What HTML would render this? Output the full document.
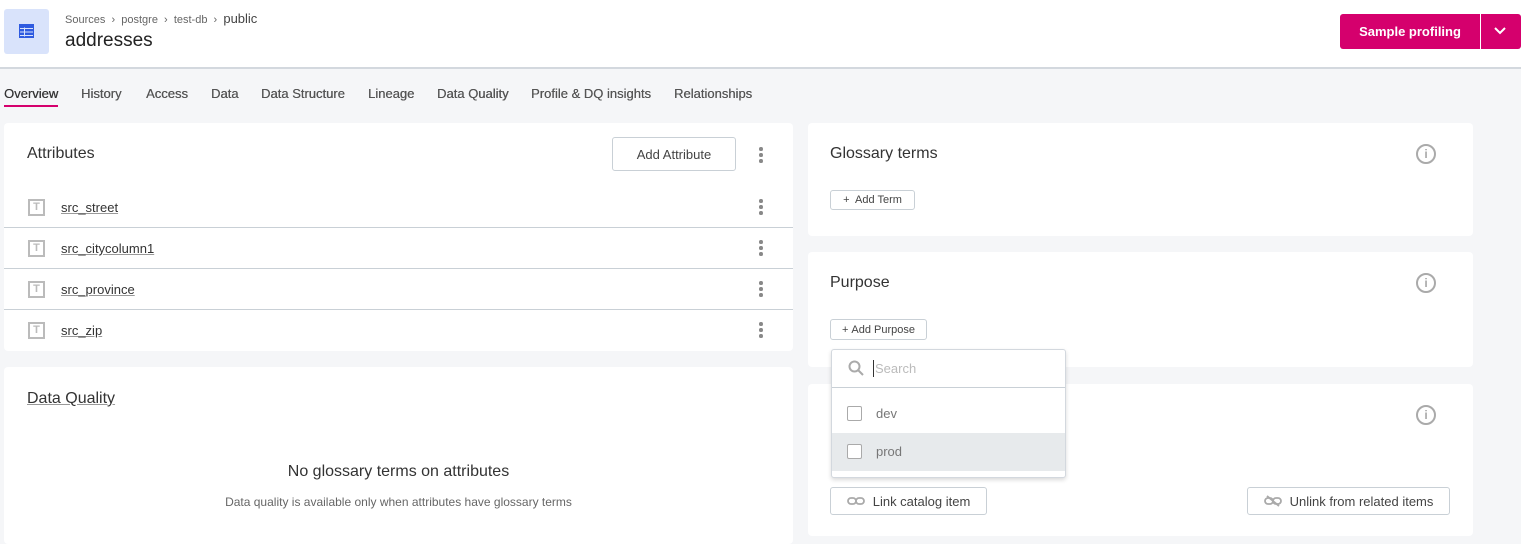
<!DOCTYPE html>
<html><head><style>
*{box-sizing:border-box;margin:0;padding:0}
body{width:1521px;height:544px;overflow:hidden;background:#f5f6f8;font-family:"Liberation Sans",Arial,sans-serif;color:#333;position:relative}
.abs{position:absolute}
.card{position:absolute;background:#fff;border-radius:4px}
.t{font-size:16px;color:#333}
.btn{position:absolute;border:1px solid #c9d0d6;border-radius:3px;background:#fff;font-size:13px;color:#444;display:flex;align-items:center;justify-content:center}
.dots{position:absolute;width:4px}
.dots i{display:block;width:3.5px;height:3.5px;border-radius:50%;background:#888;margin-bottom:2.5px}
.info{position:absolute;width:20px;height:20px;border:2px solid #aaa;border-radius:50%;color:#aaa;font-size:12px;font-weight:bold;text-align:center;line-height:16px}
.row{position:absolute;left:0;width:789px;height:41px;border-top:1px solid #c9d0d6}
.ti{position:absolute;left:24px;width:17px;height:17px;border:2px solid #bbb;color:#bbb;font-size:11px;font-weight:bold;text-align:center;line-height:13px}
.an{position:absolute;left:57px;font-size:13px;color:#333;text-decoration:underline;text-decoration-color:#999}
.tab{position:absolute;top:86px;font-size:13px;color:#555;text-shadow:0.3px 0 0 #555}
</style></head><body>
<div class="abs" style="left:0;top:0;width:1521px;height:69px;background:#fff;border-bottom:2px solid #d3d8de"></div>
<div class="abs" style="left:4px;top:9px;width:45px;height:45px;background:#d9e3fb;border-radius:3px"></div>
<svg class="abs" style="left:19px;top:24px" width="15" height="14"><rect x="0" y="0" width="15" height="14" fill="#2f5be0"/><g fill="#d9e3fb"><rect x="5" y="3.5" width="1" height="9"/><rect x="1" y="4" width="13" height="1"/><rect x="1" y="7.5" width="13" height="1"/><rect x="1" y="11" width="13" height="1"/></g></svg>
<div class="abs" style="left:65px;top:11px;font-size:11px;color:#666">Sources &nbsp;›&nbsp; postgre &nbsp;›&nbsp; test-db &nbsp;›&nbsp; <span style="font-size:13px;color:#444">public</span></div>
<div class="abs" style="left:65px;top:30px;font-size:19px;color:#222">addresses</div>
<div class="abs" style="left:1340px;top:14px;width:181px;height:35px;background:#d5006d;border-radius:3px"></div>
<div class="abs" style="left:1480px;top:14px;width:1px;height:35px;background:#fff"></div>
<div class="abs" style="left:1340px;top:24px;width:140px;text-align:center;color:#fff;font-weight:bold;font-size:13px">Sample profiling</div>
<svg class="abs" style="left:1494px;top:27px" width="12" height="8"><path d="M1 1l5 5 5-5" stroke="#fff" stroke-width="2" fill="none"/></svg>

<div class="tab" style="left:4px;color:#333">Overview</div>
<div class="abs" style="left:4px;top:105px;width:54px;height:2px;background:#d5006d"></div>
<div class="tab" style="left:81px">History</div>
<div class="tab" style="left:146px">Access</div>
<div class="tab" style="left:211px">Data</div>
<div class="tab" style="left:261px">Data Structure</div>
<div class="tab" style="left:368px">Lineage</div>
<div class="tab" style="left:437px">Data Quality</div>
<div class="tab" style="left:531px">Profile &amp; DQ insights</div>
<div class="tab" style="left:674px">Relationships</div>

<div class="card" style="left:4px;top:123px;width:789px;height:228px">
 <div class="abs t" style="left:23px;top:22px">Attributes</div>
 <div class="btn" style="left:608px;top:14px;width:124px;height:34px">Add Attribute</div>
 <div class="dots" style="left:755px;top:24px"><i></i><i></i><i></i></div>
 <div class="abs" style="left:0;top:64px;width:789px;height:41px"><div class="ti" style="top:12px">T</div><div class="an" style="top:13px">src_street</div><div class="dots" style="left:755px;top:12px"><i></i><i></i><i></i></div></div>
 <div class="row" style="top:104px"><div class="ti" style="top:12px">T</div><div class="an" style="top:13px">src_citycolumn1</div><div class="dots" style="left:755px;top:12px"><i></i><i></i><i></i></div></div>
 <div class="row" style="top:145px"><div class="ti" style="top:12px">T</div><div class="an" style="top:13px">src_province</div><div class="dots" style="left:755px;top:12px"><i></i><i></i><i></i></div></div>
 <div class="row" style="top:186px"><div class="ti" style="top:12px">T</div><div class="an" style="top:13px">src_zip</div><div class="dots" style="left:755px;top:12px"><i></i><i></i><i></i></div></div>
</div>

<div class="card" style="left:4px;top:367px;width:789px;height:177px">
 <div class="abs t" style="left:23px;top:23px;text-decoration:underline;text-decoration-color:#999">Data Quality</div>
 <div class="abs" style="left:0;top:96px;width:789px;text-align:center;font-size:16px;color:#333">No glossary terms on attributes</div>
 <div class="abs" style="left:0;top:128px;width:789px;text-align:center;font-size:12px;color:#666">Data quality is available only when attributes have glossary terms</div>
</div>

<div class="card" style="left:808px;top:123px;width:665px;height:113px">
 <div class="abs t" style="left:22px;top:22px">Glossary terms</div>
 <div class="info" style="left:608px;top:21px">i</div>
 <div class="btn" style="left:22px;top:67px;width:85px;height:20px;font-size:11px">+&nbsp; Add Term</div>
</div>
<div class="card" style="left:808px;top:252px;width:665px;height:115px">
 <div class="abs t" style="left:22px;top:22px">Purpose</div>
 <div class="info" style="left:608px;top:21px">i</div>
 <div class="btn" style="left:22px;top:67px;width:97px;height:21px;font-size:11px">+&nbsp;Add Purpose</div>
</div>
<div class="card" style="left:808px;top:384px;width:665px;height:152px">
 <div class="info" style="left:608px;top:21px">i</div>
 <div class="btn" style="left:22px;top:103px;width:157px;height:28px"><svg width="18" height="10" style="margin-right:8px"><rect x="1" y="2" width="8" height="6" rx="3" stroke="#aaa" stroke-width="1.8" fill="none"/><rect x="9" y="2" width="8" height="6" rx="3" stroke="#aaa" stroke-width="1.8" fill="none"/></svg>Link catalog item</div>
 <div class="btn" style="left:439px;top:103px;width:203px;height:28px"><svg width="18" height="12" style="margin-right:8px"><rect x="1" y="3" width="8" height="6" rx="3" stroke="#aaa" stroke-width="1.8" fill="none"/><rect x="9" y="3" width="8" height="6" rx="3" stroke="#aaa" stroke-width="1.8" fill="none"/><path d="M3 1l12 10" stroke="#aaa" stroke-width="1.8"/></svg>Unlink from related items</div>
</div>

<div class="abs" style="left:831px;top:349px;width:235px;height:129px;background:#fff;border:1px solid #d3d8de;border-radius:3px;box-shadow:0 2px 4px rgba(0,0,0,.15)">
 <svg class="abs" style="left:16px;top:10px" width="16" height="16"><circle cx="6.5" cy="6.5" r="5" stroke="#aaa" stroke-width="2" fill="none"/><path d="M10 10l5 5" stroke="#aaa" stroke-width="2"/></svg>
 <div class="abs" style="left:41px;top:10px;width:1px;height:17px;background:#333"></div>
 <div class="abs" style="left:43px;top:11px;font-size:13px;color:#bbb">Search</div>
 <div class="abs" style="left:0;top:37px;width:233px;border-top:1px solid #c9d0d6"></div>
 <div class="abs" style="left:15px;top:56px;width:15px;height:15px;border:1px solid #aaa;border-radius:2px"></div>
 <div class="abs" style="left:44px;top:56px;font-size:13px;color:#777">dev</div>
 <div class="abs" style="left:0;top:83px;width:233px;height:38px;background:#e7eaec"></div>
 <div class="abs" style="left:15px;top:94px;width:15px;height:15px;border:1px solid #aaa;border-radius:2px;background:#fff"></div>
 <div class="abs" style="left:44px;top:94px;font-size:13px;color:#777">prod</div>
</div>
</body></html>
